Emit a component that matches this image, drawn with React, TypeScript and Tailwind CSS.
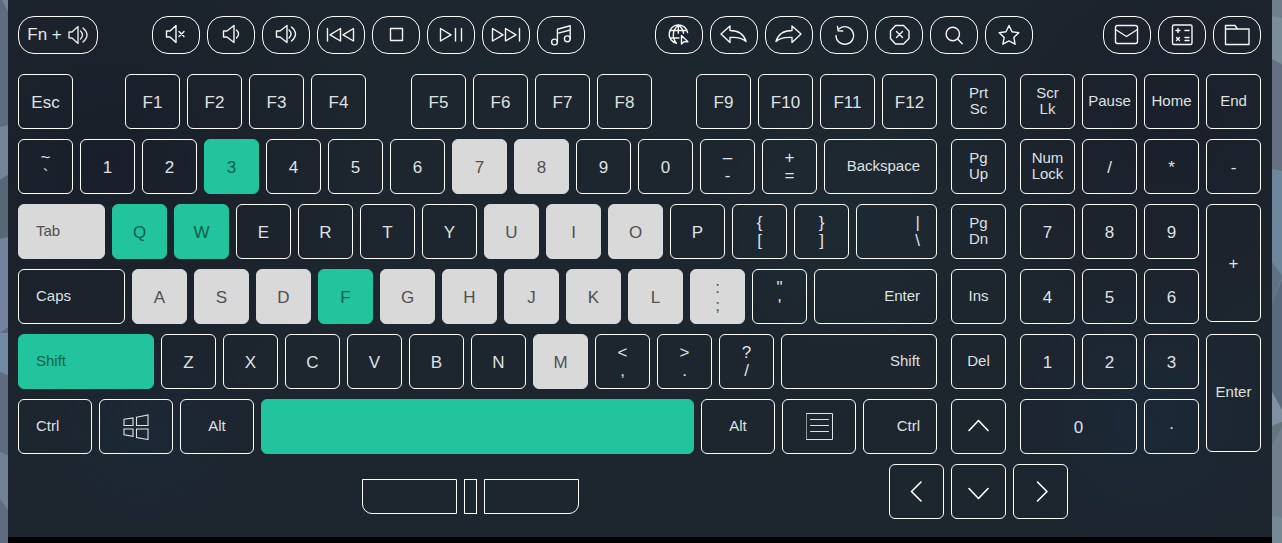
import type { ReactNode } from 'react';
import clsx from 'clsx';

type Tone = 'idle' | 'held' | 'tested';

type KeyProps = {
  label?: string;
  sub?: string;
  icon?: ReactNode;
  name?: string;
  tone?: Tone;
  small?: boolean;
  align?: 'left' | 'center' | 'right';
  size?: string;
};

const tones: Record<Tone, string> = {
  idle: 'border-white text-[#dfe1e3]',
  held: 'border-[#d9d9d9] bg-[#d9d9d9] text-[#505050]',
  tested: 'border-[#21c49d] bg-[#21c49d] text-[#0d5f4b]',
};

const aligns = {
  left: 'items-start pl-[17px]',
  center: 'items-center',
  right: 'items-end pr-4',
};

function Key({
  label,
  sub,
  icon,
  name,
  tone = 'idle',
  small = false,
  align = 'center',
  size = 'h-[55px] w-[55px]',
}: KeyProps) {
  return (
    <button
      type="button"
      aria-label={name}
      className={clsx(
        'flex shrink-0 flex-col justify-center rounded-md border',
        small ? 'pb-0.5 text-[15px] leading-4' : 'text-[17px] leading-[18px]',
        !small && label && !sub && 'pt-0.5',
        tones[tone],
        aligns[align],
        size,
      )}
    >
      {label && <span>{label}</span>}
      {sub && <span>{sub}</span>}
      {icon}
    </button>
  );
}

function Icon({ children, size = 'h-9 w-[46px]', box = '0 0 46 36' }: { children: ReactNode; size?: string; box?: string }) {
  return (
    <svg
      viewBox={box}
      className={clsx('shrink-0', size)}
      fill="none"
      stroke="currentColor"
      strokeWidth="1.4"
      strokeLinejoin="round"
      strokeLinecap="round"
      aria-hidden="true"
    >
      {children}
    </svg>
  );
}

function MediaKey({ name, children }: { name: string; children: ReactNode }) {
  return (
    <button
      type="button"
      aria-label={name}
      className="flex h-[38px] w-12 items-center justify-center rounded-2xl border border-white text-[#f5f5f5]"
    >
      <Icon>{children}</Icon>
    </button>
  );
}

function MediaRow() {
  return (
    <div className="flex justify-between">
      <button
        type="button"
        className="flex h-[38px] w-20 items-center justify-center gap-1.5 rounded-2xl border border-white text-[17px] text-[#e4e5e7]"
      >
        <span className="whitespace-nowrap">Fn +</span>
        <Icon size="h-[18px] w-[21px]" box="0 0 21 18">
          <path d="M1 6h3l6-5.5v17L4 12H1zM12.5 5q4 4 0 8M15 2q8 7 0 14" />
        </Icon>
      </button>

      <div className="-ml-[11px] flex gap-[7px]">
        <MediaKey name="Mute">
          <path d="M13.5 14h3.5l6-5.5v17l-6-5.5h-3.5zM26 14.5l5 5M31 14.5l-5 5" />
        </MediaKey>
        <MediaKey name="Volume down">
          <path d="M15.5 14h3.5l7-5.5v17l-7-5.5h-3.5zM28.5 13q4 4 0 8" />
        </MediaKey>
        <MediaKey name="Volume up">
          <path d="M13.5 14h3.5l7-5.5v17l-7-5.5h-3.5zM26 13q4 4 0 8M28.5 10q8 7 0 14" />
        </MediaKey>
        <MediaKey name="Previous track">
          <path d="M9.5 11.5v12.5M22.5 11.5v12.5l-10.5-6.2zM35.5 11.5v12.5l-10.5-6.2z" />
        </MediaKey>
        <MediaKey name="Stop">
          <path d="M17.5 11.5h12v12h-12z" />
        </MediaKey>
        <MediaKey name="Play or pause">
          <path d="M12.5 11.5v12.5l10.5-6.2zM27.5 11.5v12.5M33.5 11.5v12.5" />
        </MediaKey>
        <MediaKey name="Next track">
          <path d="M9.5 11.5v12.5l10.500-6.200zM22.500 11.500v12.500l10.500-6.200zM36.500 11.500v12.500" />
        </MediaKey>
        <MediaKey name="Music">
          <circle cx="16.5" cy="25" r="2.9" />
          <circle cx="29.3" cy="21.8" r="2.9" />
          <path d="M19.4 25V12.2l12.8-3.4v13M19.4 16.4l12.8-3.4" />
        </MediaKey>
      </div>

      <div className="ml-[5px] flex gap-[7px]">
        <MediaKey name="Browser">
          <path d="M20.5 26.3A9.3 9.3 0 1 1 31.6 15.5M20.5 26.3c-4.5-5-4.5-13 1.8-18.1 3.4 2.3 5 5 5.2 8M14.3 13.5h16.5M14 21h9M22.3 8.2v8" />
          <path d="M25.5 18.5v8.5l2.4-2.3h4z" />
        </MediaKey>
        <MediaKey name="Back">
          <path d="M10 17l9-8v4.5c8 0 14 4 16 11-4.5-4-9.5-4.5-16-4v5z" />
        </MediaKey>
        <MediaKey name="Forward">
          <path d="M35 17l-9-8v4.5c-8 0-14 4-16 11 4.5-4 9.5-4.5 16-4v5z" />
        </MediaKey>
        <MediaKey name="Refresh">
          <path d="M15 18.5a8.8 8.8 0 1 0 3.2-6.8M16.500 9.500l.7 4.300 4.500.2" />
        </MediaKey>
        <MediaKey name="Cancel">
          <path d="M19.5 8.5h8l5.500 5.500v7.500l-5.500 5.500h-8l-5-5.500V14zM20.500 14.500l6 6M26.500 14.500l-6 6" />
        </MediaKey>
        <MediaKey name="Search">
          <circle cx="21.800" cy="17" r="6.700" />
          <path d="M26.600 22l4.600 4.800" />
        </MediaKey>
        <MediaKey name="Favorites">
          <path d="M23 8.500l3 6.300 6.800.9-5 4.700 1.300 6.800-6.100-3.300-6.100 3.300 1.300-6.800-5-4.700 6.800-.9z" />
        </MediaKey>
      </div>

      <div className="ml-[5px] flex gap-[7px]">
        <MediaKey name="Mail">
          <rect x="11.500" y="8.500" width="22" height="18" rx="2" />
          <path d="M11.500 12.500l11 7 11-7" />
        </MediaKey>
        <MediaKey name="Calculator">
          <rect x="13.500" y="8" width="19.500" height="19.500" rx="1.500" />
          <path d="M17 13.500h4M19 11.500v4M26 13.500h4M17.500 20.500l3 3M20.500 20.500l-3 3M26 20.500h4M26 23.500h4" />
        </MediaKey>
        <MediaKey name="Files">
          <path d="M11.500 27.500v-19h9.500l2.500 3.500h11.500v15.500zM11.500 12h12" />
        </MediaKey>
      </div>
    </div>
  );
}

const windowsIcon = (
  <Icon size="h-[26px] w-[26px]" box="0 0 26 26">
    <path strokeWidth="1.1" strokeLinejoin="miter" d="M1 5.300l9-1.300v7.500H1zM13.500 3.300L25 1v10.500H13.500zM1 15H10v7.300L1 20.800zM13.500 15H25v10.500l-11.500-2z" />
  </Icon>
);

const menuIcon = (
  <Icon size="h-[27px] w-[27px]" box="0 0 27 27">
    <path strokeWidth="1" d="M.5.5h26v26H.5zM4.500 6.500h18M4.500 12.500h18M4.500 18.500h18" />
  </Icon>
);

function Chevron({ d }: { d: string }) {
  return (
    <Icon size="h-[25px] w-[25px] text-white" box="0 0 25 25">
      <path strokeWidth="1.6" d={d} />
    </Icon>
  );
}

const wide = 'h-[55px] w-[74px]';
const fill = 'h-[55px] min-w-0 flex-1';

function Row({ children }: { children: ReactNode }) {
  return <div className="flex gap-[7px]">{children}</div>;
}

function Keys({ labels, tested = '', held = '' }: { labels: string; tested?: string; held?: string }) {
  return (
    <>
      {labels.split('').map((l) => (
        <Key key={l} label={l} tone={tested.includes(l) ? 'tested' : held.includes(l) ? 'held' : 'idle'} />
      ))}
    </>
  );
}

function MainBlock() {
  return (
    <div className="flex min-w-0 flex-1 flex-col gap-2.5">
      <Row>
        <Key label="Esc" />
        <div className="flex-1" />
        {['F1', 'F2', 'F3', 'F4'].map((f) => <Key key={f} label={f} />)}
        <div className="w-[31px]" />
        {['F5', 'F6', 'F7', 'F8'].map((f) => <Key key={f} label={f} />)}
        <div className="w-[30px]" />
        {['F9', 'F10', 'F11', 'F12'].map((f) => <Key key={f} label={f} />)}
      </Row>
      <Row>
        <Key label="~" sub="`" />
        <Keys labels="1234567890" tested="3" held="78" />
        <Key label="–" sub="-" />
        <Key label="+" sub="=" />
        <Key label="Backspace" small align="right" size={fill} />
      </Row>
      <Row>
        <Key label="Tab" small align="left" tone="held" size="h-[55px] w-[87px]" />
        <Keys labels="QWERTYUIOP" tested="QW" held="UIO" />
        <Key label="{" sub="[" />
        <Key label="}" sub="]" />
        <Key label="|" sub="\" align="right" size={fill} />
      </Row>
      <Row>
        <Key label="Caps" small align="left" size="h-[55px] w-[107px]" />
        <Keys labels="ASDFGHJKL" tested="F" held="ASDGHJKL" />
        <Key label=":" sub=";" tone="held" />
        <Key label={'"'} sub="'" />
        <Key label="Enter" small align="right" size={fill} />
      </Row>
      <Row>
        <Key label="Shift" small align="left" tone="tested" size="h-[55px] w-[136px]" />
        <Keys labels="ZXCVBNM" held="M" />
        <Key label="<" sub="," />
        <Key label=">" sub="." />
        <Key label="?" sub="/" />
        <Key label="Shift" small align="right" size={fill} />
      </Row>
      <Row>
        <Key label="Ctrl" small align="left" size={wide} />
        <Key name="Windows" icon={windowsIcon} size={wide} />
        <Key label="Alt" small size={wide} />
        <Key name="Space" tone="tested" size={fill} />
        <Key label="Alt" small size={wide} />
        <Key name="Menu" icon={menuIcon} size={wide} />
        <Key label="Ctrl" small align="right" size={wide} />
      </Row>
    </div>
  );
}

function NavBlock() {
  return (
    <div className="flex flex-col gap-2.5">
      <Key label="Prt" sub="Sc" small />
      <Key label="Pg" sub="Up" small />
      <Key label="Pg" sub="Dn" small />
      <Key label="Ins" small />
      <Key label="Del" small />
      <Key name="Up" icon={<Chevron d="M3 16.500l9.500-10 9.500 10" />} />
    </div>
  );
}

function NumPad() {
  return (
    <div className="grid auto-rows-[55px] grid-cols-[repeat(4,55px)] gap-x-[7px] gap-y-2.5">
      <Key label="Scr" sub="Lk" small />
      <Key label="Pause" small />
      <Key label="Home" small />
      <Key label="End" small />
      <Key label="Num" sub="Lock" small />
      <Key label="/" />
      <Key label="*" />
      <Key label="-" />
      <Keys labels="789" />
      <Key label="+" size="row-span-2 h-[118px] w-[55px]" />
      <Keys labels="456" />
      <Keys labels="123" />
      <Key label="Enter" small size="row-span-2 h-[118px] w-[55px]" />
      <Key label="0" size="col-span-2 h-[55px]" />
      <Key label="·" />
    </div>
  );
}

function BottomRow() {
  return (
    <div className="flex items-start justify-between pr-[193px] pl-[344px]">
      <div className="flex gap-[7px] pt-[15px]">
        <button type="button" aria-label="Left click" className="h-[35px] w-[95px] rounded-bl-[10px] border border-white" />
        <button type="button" aria-label="Middle click" className="h-[35px] w-[13px] border border-white" />
        <button type="button" aria-label="Right click" className="h-[35px] w-[95px] rounded-br-[10px] border border-white" />
      </div>
      <Row>
        <Key name="Left" icon={<Chevron d="M17 3l-9.500 9.500 9.500 9.500" />} />
        <Key name="Down" icon={<Chevron d="M3 9.500l9.500 10 9.500-10" />} />
        <Key name="Right" icon={<Chevron d="M9.500 3l9.500 9.500-9.500 9.500" />} />
      </Row>
    </div>
  );
}

export default function App() {
  return (
    <div className="flex bg-[#66758a] font-['Liberation_Sans',Arial,sans-serif]">
      <svg viewBox="0 0 8 543" preserveAspectRatio="none" className="w-2 shrink-0" aria-hidden="true">
        <path fill="#5e6b80" d="M0 0h8v543H0z" />
        <path fill="#74859b" d="M0 0h2l6 11V0zM0 127l8-2v50l-8 5z" />
        <path fill="#596774" d="M0 180l8-5v62l-8 2z" />
        <path fill="#76829d" d="M0 239l8-2v90l-8 6z" />
        <path fill="#718ba4" d="M0 333h8v42l-8-3z" />
        <path fill="#728195" d="M0 452l8 3v55l-8-11z" />
      </svg>

      <div className="min-w-0 flex-1 bg-black pb-1.5">
        <main className="flex flex-col bg-[#1d252e] bg-[radial-gradient(circle_at_8%_30%,#191f2a,transparent_22%),radial-gradient(circle_at_66%_42%,#1d2a33,transparent_18%),radial-gradient(circle_at_90%_78%,#1a2836,transparent_12%),radial-gradient(circle_at_11%_80%,#1b2835,transparent_9%),radial-gradient(circle_at_92%_24%,#1a202b,transparent_18%)] pt-4 pr-[11px] pb-[18px] pl-2.5">
          <MediaRow />
          <div className="flex gap-3.5 pt-5 pb-2.5">
            <MainBlock />
            <NavBlock />
            <NumPad />
          </div>
          <BottomRow />
        </main>
      </div>

      <svg viewBox="0 0 10 543" preserveAspectRatio="none" className="w-2.5 shrink-0" aria-hidden="true">
        <path fill="#707f8b" d="M0 0h10v543H0z" />
        <path fill="#7b8d98" d="M0 16l10 2v46L0 59z" />
        <path fill="#657080" d="M0 59l10 6v106l-10-2z" />
        <path fill="#6f879c" d="M0 169l10 2v104L0 262z" />
        <path fill="#5f7284" d="M0 262l10 14-10 26z" />
        <path fill="#697990" d="M0 302l10-26v3L0 303z" />
        <path fill="#5a6a7c" d="M0 303l10-23v130L0 392z" />
        <path fill="#8190a0" d="M0 392l10 18v12l-10 4z" />
        <path fill="#66747c" d="M0 426l10-4v5L0 445z" />
        <path fill="#778993" d="M0 516l10 2v25H0z" />
      </svg>
    </div>
  );
}
